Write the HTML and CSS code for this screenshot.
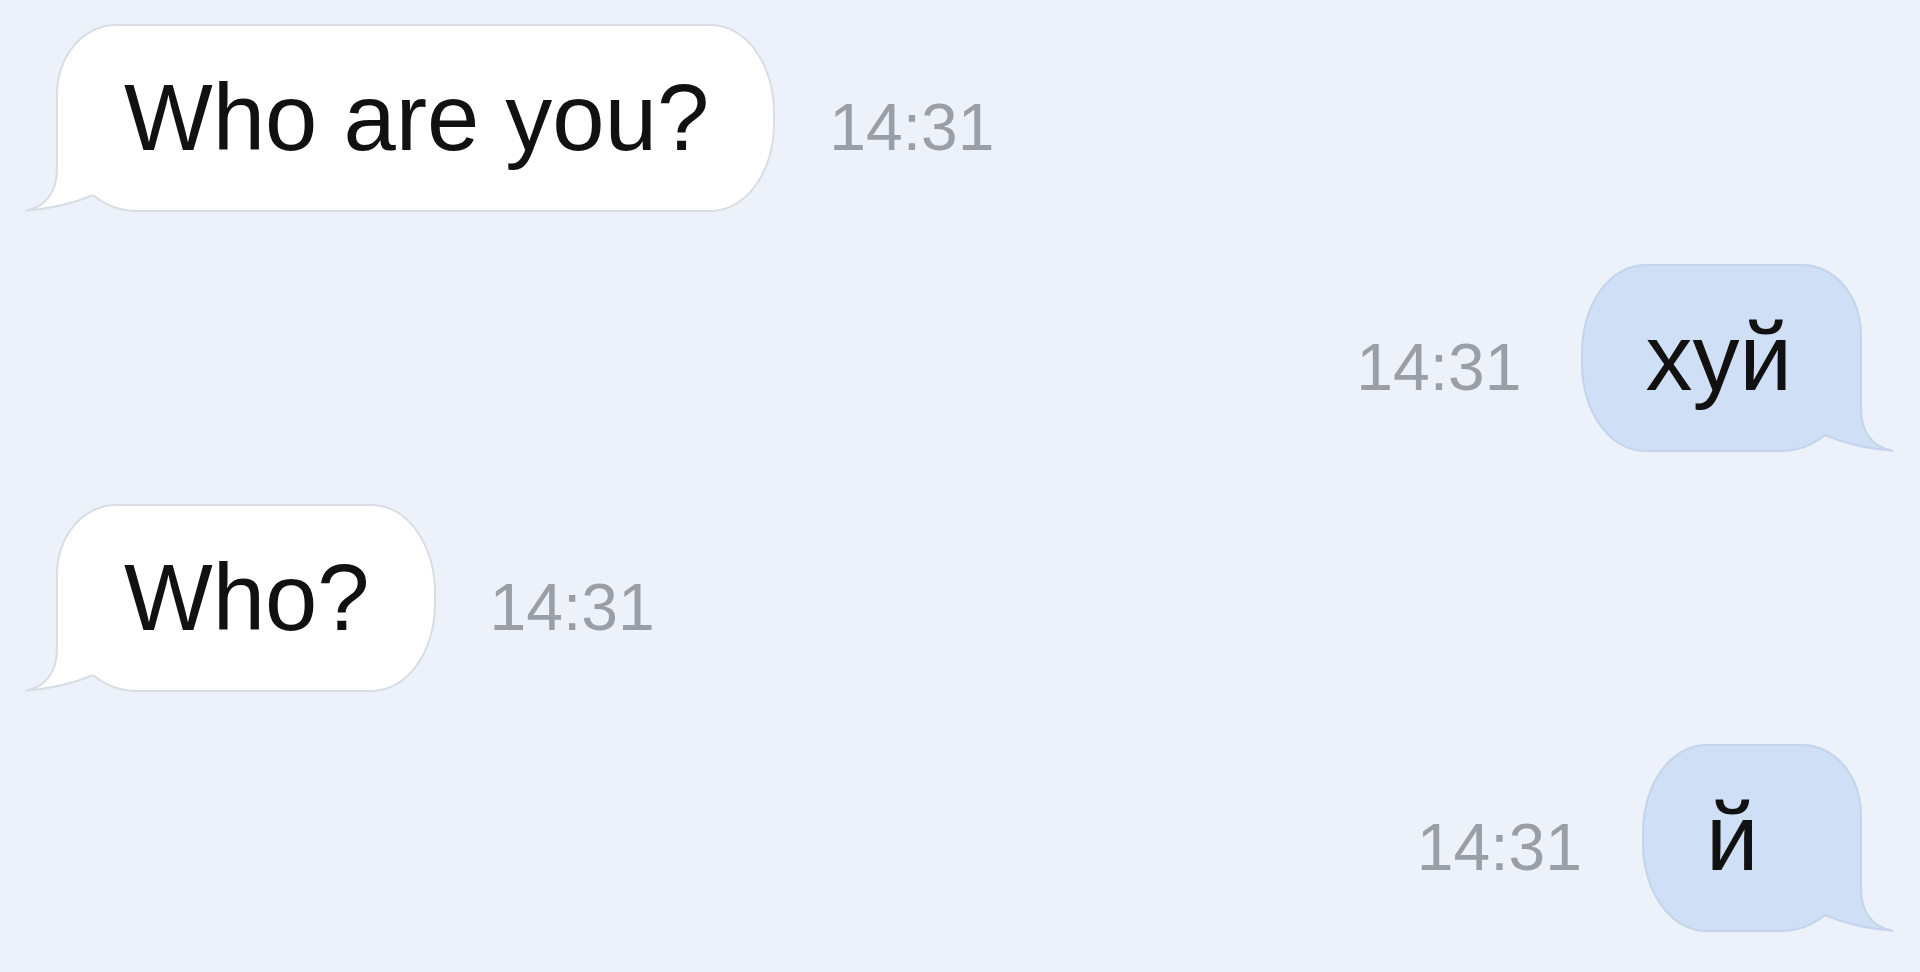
FILE: index.html
```html
<!DOCTYPE html>
<html lang="ru">
<head>
  <meta charset="UTF-8">
  <meta name="viewport" content="width=device-width, initial-scale=1.0">
  <title>Чат</title>
  <link rel="stylesheet" href="styles.css">
</head>
<body>
  <main class="chat">

    <div class="row in">
      <div class="bubble">Who are you?
        <svg class="tail" width="110" height="110" viewBox="0 0 110 110">
          <path class="tail-fill" d="M35,5 L35,66 C35,90 24,105 4,108.5 Q40,106 70,93.5 L100,30 L40,5 Z"/>
          <path class="tail-line" d="M35,5 L35,66 C35,90 24,105 4,108.5 Q40,106 70,93.5"/>
        </svg>
      </div>
      <span class="time">14:31</span>
    </div>

    <div class="row out">
      <span class="time">14:31</span>
      <div class="bubble">хуй
        <svg class="tail" width="110" height="110" viewBox="0 0 110 110">
          <path class="tail-fill" d="M35,5 L35,66 C35,90 24,105 4,108.5 Q40,106 70,93.5 L100,30 L40,5 Z"/>
          <path class="tail-line" d="M35,5 L35,66 C35,90 24,105 4,108.5 Q40,106 70,93.5"/>
        </svg>
      </div>
    </div>

    <div class="row in">
      <div class="bubble">Who?
        <svg class="tail" width="110" height="110" viewBox="0 0 110 110">
          <path class="tail-fill" d="M35,5 L35,66 C35,90 24,105 4,108.5 Q40,106 70,93.5 L100,30 L40,5 Z"/>
          <path class="tail-line" d="M35,5 L35,66 C35,90 24,105 4,108.5 Q40,106 70,93.5"/>
        </svg>
      </div>
      <span class="time">14:31</span>
    </div>

    <div class="row out">
      <span class="time">14:31</span>
      <div class="bubble">й
        <svg class="tail" width="110" height="110" viewBox="0 0 110 110">
          <path class="tail-fill" d="M35,5 L35,66 C35,90 24,105 4,108.5 Q40,106 70,93.5 L100,30 L40,5 Z"/>
          <path class="tail-line" d="M35,5 L35,66 C35,90 24,105 4,108.5 Q40,106 70,93.5"/>
        </svg>
      </div>
    </div>

  </main>
</body>
</html>
```

FILE: styles.css
```css
body {
  margin: 0;
  background: #edf2fa;
  font-family: "Liberation Sans", Arial, sans-serif;
  color: #111;
}
.chat {
  display: flex;
  flex-direction: column;
  gap: 52px;
  padding: 24px 58px 0 56px;
}
.row {
  display: flex;
  align-items: baseline;
  gap: 54px;
}
.row.out {
  justify-content: flex-end;
  gap: 60px;
}

.bubble {
  position: relative;
  box-sizing: border-box;
  height: 188px;
  min-width: 220px;
  line-height: 184px;
  font-size: 94px;
  white-space: nowrap;
  border: 2px solid;
}
.in .bubble {
  background: #fff;
  border-color: #d9dde4;
  border-radius: 60px 64px 64px 80px / 70px 88px 88px 100px;
  padding: 0 64px 0 66px;
}
.out .bubble {
  background: #cfe0f6;
  border-color: #c3d4eb;
  border-radius: 64px 60px 80px 64px / 88px 70px 100px 88px;
  padding: 0 68px 0 62px;
}

/* tail sits over the bottom corner of the bubble */
.tail {
  position: absolute;
  bottom: -2px;
}
.in .tail { left: -36px; }
.out .tail { right: -36px; transform: scaleX(-1); }
.tail-line { fill: none; stroke-width: 2; stroke-linejoin: round; }
.in .tail-fill { fill: #fff; }
.in .tail-line { stroke: #d9dde4; }
.out .tail-fill { fill: #cfe0f6; }
.out .tail-line { stroke: #c3d4eb; }

.time {
  font-size: 66px;
  color: #9a9fa7;
}
```
